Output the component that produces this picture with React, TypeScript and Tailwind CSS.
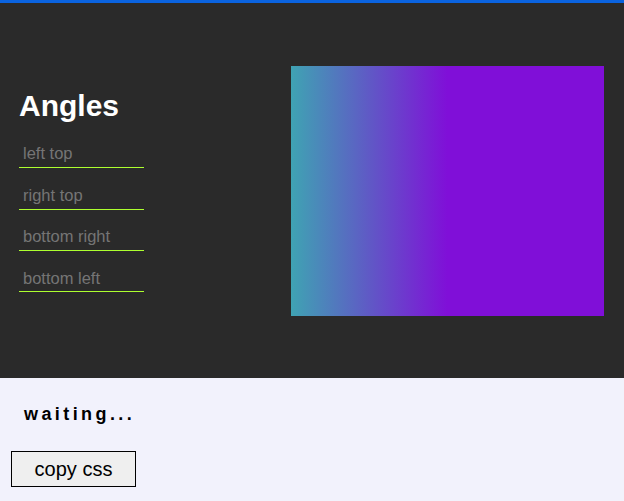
import React from "react"

const corners = ["left top", "right top", "bottom right", "bottom left"]

export default function App() {
  return (
    <div className="min-h-screen bg-[#f2f2fc] font-['Liberation_Sans',Arial,sans-serif]">
      <div className="h-[3px] bg-[#0a63e0]" />

      <section className="flex h-[375px] items-center justify-between bg-[#2a2a2a] pl-[19px] pr-[20px]">
        <div className="flex flex-col">
          <h1 className="mb-[18px] text-[30px] font-bold leading-[34px] text-white">Angles</h1>
          <div className="flex flex-col gap-[14px]">
            {corners.map((c) => (
              <input
                key={c}
                placeholder={c}
                className="h-[27.4px] w-[125px] border-b border-[#adff2f] bg-transparent px-[4px] text-[16.5px] text-white outline-none placeholder:text-[#757575]"
              />
            ))}
          </div>
        </div>

        <div className="h-[250px] w-[313px] bg-[linear-gradient(to_right,#3fa3b3,#800fd8_50%)]" />
      </section>

      <div className="flex flex-col items-start px-[11px]">
        <p className="mt-[25px] pl-[13px] text-[18px] font-bold leading-[22px] tracking-[0.19em] text-black">
          waiting...
        </p>
        <button className="mt-[26px] h-[36px] w-[125px] border border-black bg-[#efefef] text-[20px] text-black">
          copy css
        </button>
      </div>
    </div>
  )
}
